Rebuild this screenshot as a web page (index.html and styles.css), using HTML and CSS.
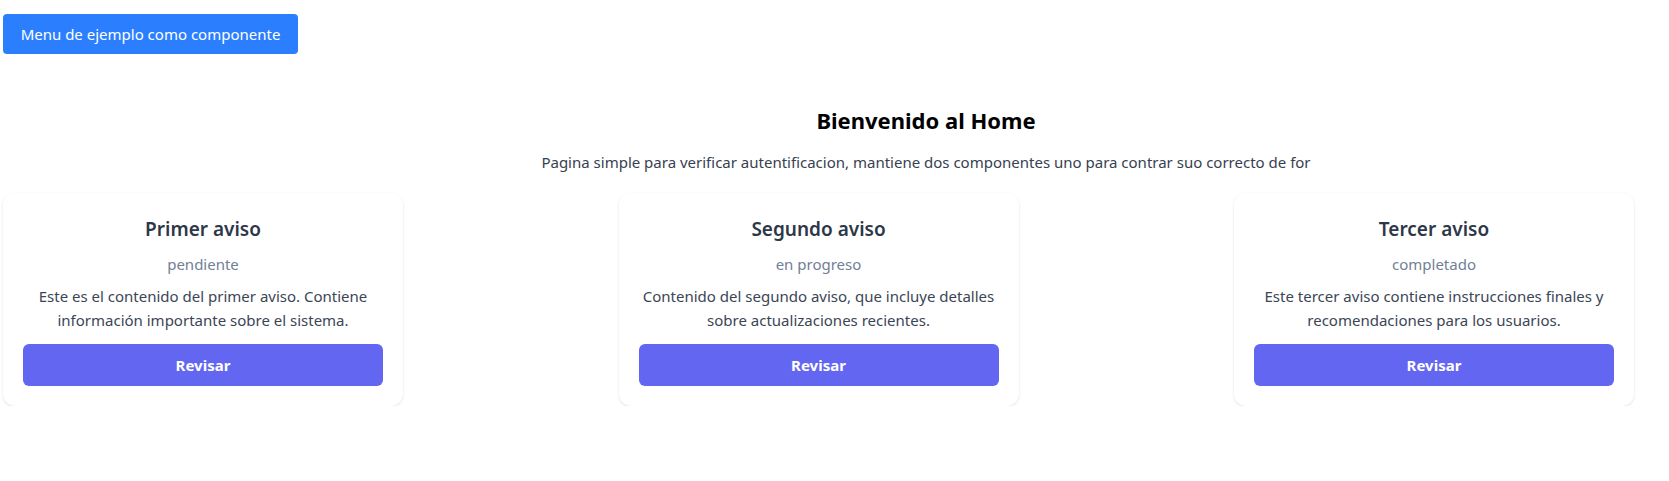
FILE: index.html
```html
<!DOCTYPE html>
<html lang="es">
<head>
<meta charset="utf-8">
<title>Home</title>
<link rel="stylesheet" href="styles.css">
</head>
<body>
<div class="page">
  <nav class="nav">
    <button class="menu-btn">Menu de ejemplo como componente</button>
  </nav>
  <main class="home">
    <header class="intro">
      <h1 class="intro-title">Bienvenido al Home</h1>
      <p class="intro-text">Pagina simple para verificar autentificacion, mantiene dos componentes uno para contrar suo correcto de for</p>
    </header>
    <section class="cards">
      <article class="card">
        <h3 class="card-title">Primer aviso</h3>
        <p class="card-status">pendiente</p>
        <p class="card-text">Este es el contenido del primer aviso. Contiene información importante sobre el sistema.</p>
        <button class="card-btn">Revisar</button>
      </article>
      <article class="card">
        <h3 class="card-title">Segundo aviso</h3>
        <p class="card-status">en progreso</p>
        <p class="card-text">Contenido del segundo aviso, que incluye detalles sobre actualizaciones recientes.</p>
        <button class="card-btn">Revisar</button>
      </article>
      <article class="card">
        <h3 class="card-title">Tercer aviso</h3>
        <p class="card-status">completado</p>
        <p class="card-text">Este tercer aviso contiene instrucciones finales y recomendaciones para los usuarios.</p>
        <button class="card-btn">Revisar</button>
      </article>
    </section>
  </main>
</div>
</body>
</html>
```
FILE: styles.css
```css
* { box-sizing: border-box; }

html, body {
  margin: 0;
  padding: 0;
  background: #ffffff;
}

body {
  font-family: "Noto Sans", "Open Sans", Arial, sans-serif;
  font-size: 15px;
  line-height: 24px;
  color: #374151;
  overflow: hidden;
}

.page {
  width: 100%;
  overflow: hidden;
  padding-left: 3px;
}

.nav {
  display: flex;
  padding-top: 14px;
}

.menu-btn {
  height: 40px;
  width: 295px;
  padding: 0;
  border: none;
  border-radius: 4px;
  background: #2b7fff;
  color: #ffffff;
  font-family: inherit;
  font-size: 15px;
  cursor: pointer;
}

.home {
  width: 1846px;
}

.intro {
  text-align: center;
  margin-top: 51px;
}

.intro-title {
  margin: 0;
  font-size: 22px;
  line-height: 30px;
  font-weight: 700;
  color: #000000;
}

.intro-text {
  margin: 15px 0 0;
  font-size: 15px;
  line-height: 24px;
  color: #374151;
}

.cards {
  display: grid;
  grid-template-columns: repeat(3, 615.5px);
  margin-top: 19px;
}

.card {
  width: 400px;
  background: #ffffff;
  border-radius: 12px;
  box-shadow: 0 1px 3px 0 rgba(0, 0, 0, 0.10), 0 1px 2px -1px rgba(0, 0, 0, 0.08);
  padding: 22px 20px 20px;
  text-align: center;
  display: flex;
  flex-direction: column;
}

.card-title {
  margin: 0;
  font-size: 19px;
  line-height: 28px;
  font-weight: 600;
  color: #2d3748;
}

.card-status {
  margin: 9px 0 0;
  font-size: 15px;
  line-height: 24px;
  color: #718096;
}

.card-text {
  margin: 8px 0 0;
  font-size: 15px;
  line-height: 24px;
  color: #3b4556;
}

.card-btn {
  margin-top: 12px;
  height: 42px;
  width: 100%;
  border: none;
  border-radius: 6px;
  background: #6366f1;
  color: #ffffff;
  font-family: inherit;
  font-size: 15px;
  font-weight: 700;
  cursor: pointer;
}
```
